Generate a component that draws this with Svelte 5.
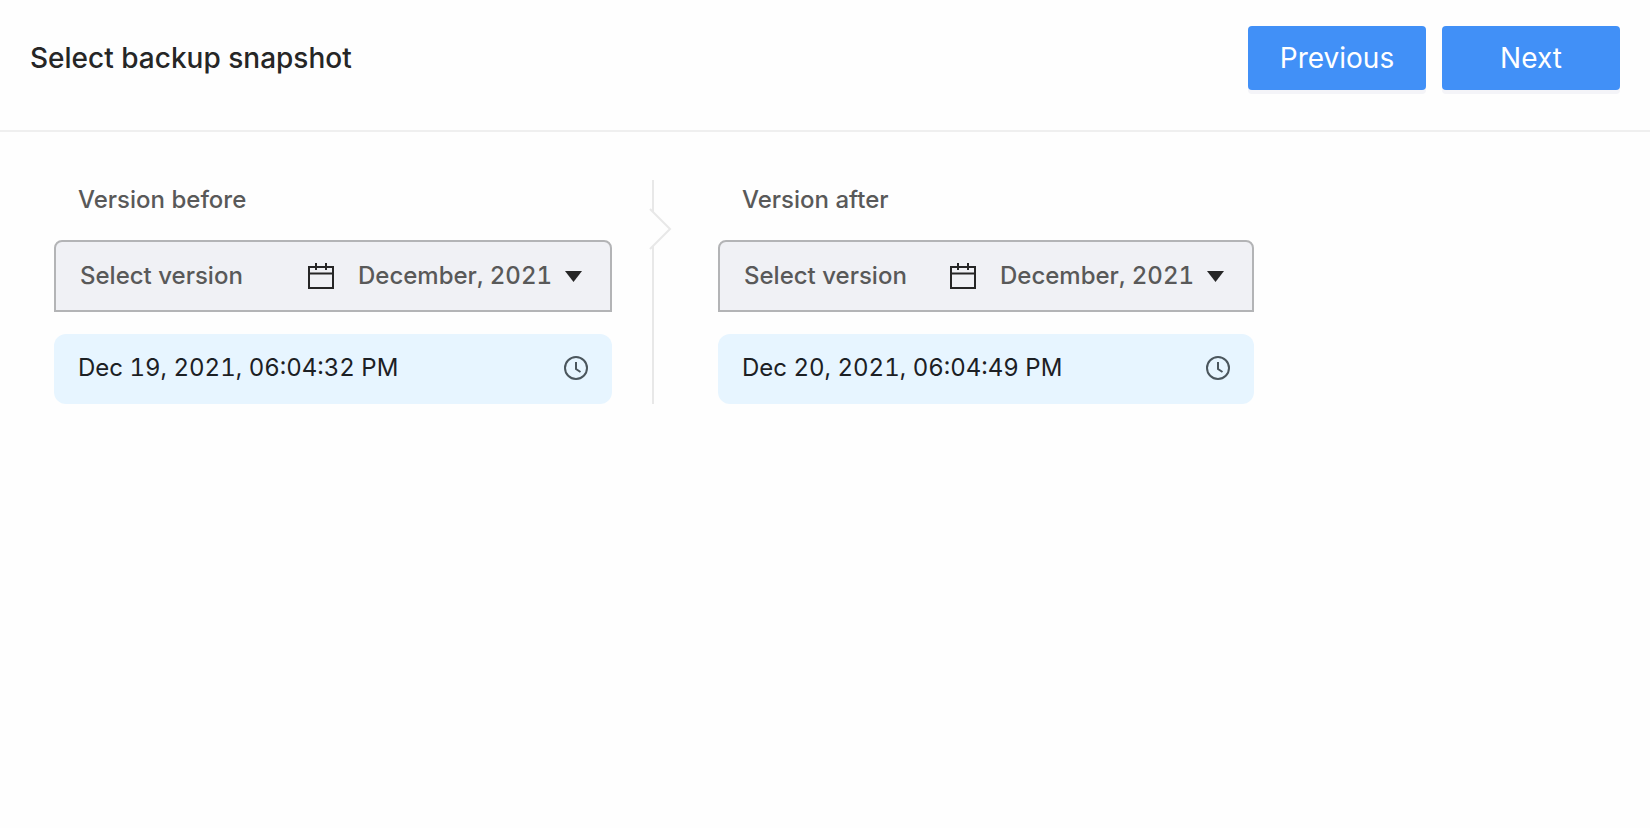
<script>
  const months = ['October, 2021', 'November, 2021', 'December, 2021'];

  let panels = $state([
    { id: 'before', title: 'Version before', month: 'December, 2021', versions: ['Dec 19, 2021, 06:04:32 PM'] },
    { id: 'after', title: 'Version after', month: 'December, 2021', versions: ['Dec 20, 2021, 06:04:49 PM'] }
  ]);
</script>

<div class="page">
  <header>
    <h1>Select backup snapshot</h1>
    <div class="actions">
      <button type="button" class="primary">Previous</button>
      <button type="button" class="primary">Next</button>
    </div>
  </header>

  <main>
    {#each panels as panel, i (panel.id)}
      <section class={panel.id}>
        <h2>{panel.title}</h2>
        <div class="picker">
          <label for="month-{panel.id}">Select version</label>
          <svg class="calendar" viewBox="0 0 26 26" aria-hidden="true">
            <path d="M1 4H25V25H1ZM1 10.5H25" />
            <path d="M8 0V7M18 0V7" />
          </svg>
          <select id="month-{panel.id}" bind:value={panel.month}>
            {#each months as month}
              <option>{month}</option>
            {/each}
          </select>
          <svg class="caret" viewBox="0 0 18 11" aria-hidden="true">
            <path d="M1 0H18L9.5 11Z" />
          </svg>
        </div>
        {#each panel.versions as version}
          <button type="button" class="version">
            <span>{version}</span>
            <svg class="clock" viewBox="0 0 24 24" aria-hidden="true">
              <circle cx="12" cy="12" r="11" />
              <path d="M12 6V13L16.5 16" />
            </svg>
          </button>
        {/each}
        {#if i === 0}
          <svg class="arrow" viewBox="0 0 24 44" aria-hidden="true">
            <path d="M2 2L22 22L2 42" />
          </svg>
        {/if}
      </section>
    {/each}
  </main>
</div>

<style>
  :global(body) {
    margin: 0;
    background: #fefefe;
  }

  .page,
  button,
  select {
    font-family: Inter, 'Liberation Sans', sans-serif;
    font-variant-numeric: tabular-nums;
  }

  header {
    display: flex;
    align-items: center;
    justify-content: space-between;
    padding: 26px 30px 40px;
    border-bottom: 2px solid #efefef;
  }

  h1 {
    margin: 0;
    font-size: 28px;
    line-height: 64px;
    font-weight: 500;
    color: #262626;
  }

  .actions {
    display: flex;
    gap: 16px;
  }

  .primary {
    width: 178px;
    height: 64px;
    padding: 0;
    border: 0;
    border-radius: 4px;
    background: #4190f7;
    box-shadow: 0 4px 0 #f4f4f8;
    color: #fff;
    font-size: 28px;
    cursor: pointer;
  }

  main {
    display: grid;
    grid-template-columns: 1fr 1fr;
    max-width: 1200px;
    padding: 48px 54px;
  }

  section {
    position: relative;
    min-width: 0;
  }

  .before {
    padding-right: 40px;
    border-right: 2px solid #e8e8e8;
  }

  .after {
    padding-left: 64px;
  }

  h2 {
    margin: 0 0 20px;
    padding: 0 24px;
    font-size: 24px;
    line-height: 40px;
    font-weight: 500;
    color: #595959;
  }

  .picker {
    display: flex;
    align-items: center;
    box-sizing: border-box;
    height: 72px;
    padding: 0 28px 0 24px;
    border: 2px solid #b3b4b6;
    border-radius: 8px 8px 0 0;
    background: #f0f1f5;
  }

  label,
  select {
    padding: 0 0 2px;
    font-size: 24px;
    font-weight: 500;
    color: #595959;
  }

  label {
    flex: 1;
  }

  select {
    appearance: none;
    field-sizing: content;
    margin: 0 12px 0 24px;
    border: 0;
    background: none;
    cursor: pointer;
  }

  .calendar {
    flex: none;
    width: 26px;
    height: 26px;
    fill: none;
    stroke: #262626;
    stroke-width: 2;
  }

  .caret {
    flex: none;
    width: 18px;
    height: 11px;
    fill: #262626;
  }

  .version {
    display: flex;
    align-items: center;
    justify-content: space-between;
    width: 100%;
    height: 70px;
    margin: 22px 0 0;
    padding: 0 24px 2px;
    border: 0;
    border-radius: 12px;
    background: #e7f5ff;
    color: #1c2024;
    font-size: 24px;
    cursor: pointer;
  }

  .version span {
    padding-bottom: 2px;
  }

  .clock {
    width: 24px;
    height: 24px;
    fill: none;
    stroke: #4b565d;
    stroke-width: 2;
  }

  .arrow {
    position: absolute;
    top: 27px;
    right: -20px;
    width: 24px;
    height: 44px;
    fill: #fefefe;
    stroke: #e8e8e8;
    stroke-width: 2;
  }
</style>
